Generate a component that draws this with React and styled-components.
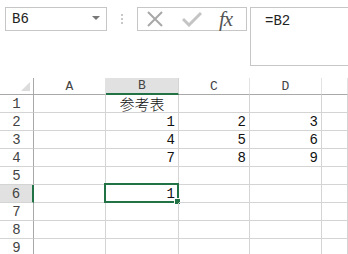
import React from "react";
import styled, { createGlobalStyle } from "styled-components";

const Global = createGlobalStyle`
  html, body { margin: 0; padding: 0; background: #fff; overflow: hidden; }
`;

const Page = styled.div`
  width: 348px;
  height: 254px;
  overflow: hidden;
  background: #fff;
  font-family: "Liberation Mono", "Noto Sans CJK SC", monospace;
`;

const Toolbar = styled.div`
  display: flex;
  align-items: flex-start;
  padding: 7px 0 0 5px;
  height: 78px;
  box-sizing: border-box;
`;

const NameBox = styled.div`
  width: 102px;
  height: 24px;
  box-sizing: border-box;
  border: 1px solid #c6c6c6;
  display: flex;
  align-items: center;
  justify-content: space-between;
  padding: 0 6px 0 6px;
  font-size: 14px;
  color: #222;
`;

const Caret = styled.span`
  width: 0;
  height: 0;
  border-left: 4px solid transparent;
  border-right: 4px solid transparent;
  border-top: 4px solid #777;
  margin-bottom: 3px;
`;

const Dots = styled.div`
  width: 30px;
  height: 24px;
  display: flex;
  flex-direction: column;
  align-items: center;
  justify-content: center;
  gap: 2px;
  span {
    width: 2px;
    height: 2px;
    background: #c8c8c8;
  }
`;

const FxBox = styled.div`
  width: 110px;
  height: 24px;
  box-sizing: border-box;
  border: 1px solid #c6c6c6;
  display: flex;
  align-items: center;
  padding-left: 8px;
  gap: 18px;
`;

const FxLabel = styled.span`
  font-family: "Liberation Serif", serif;
  font-style: italic;
  font-size: 21px;
  color: #555;
  letter-spacing: -1px;
  margin-left: -1px;
`;

const FormulaInput = styled.div`
  margin-left: 3px;
  flex: 1;
  height: 59px;
  box-sizing: border-box;
  border: 1px solid #c6c6c6;
  border-right: none;
  padding: 5px 0 0 14px;
  font-size: 14px;
  color: #222;
`;

const Sheet = styled.div`
  display: grid;
  grid-template-columns: 34px 72px 73px 71px 72px 1fr;
  grid-auto-rows: 18px;
  grid-template-rows: 17px;
  font-size: 14px;
`;

const Cell = styled.div`
  position: relative;
  box-sizing: border-box;
  border-right: 1px solid #d4d4d4;
  border-bottom: 1px solid #d4d4d4;
  display: flex;
  align-items: center;
  justify-content: ${(p) => (p.$center ? "center" : "flex-end")};
  padding-right: ${(p) => (p.$center ? "0" : "3px")};
  color: #111;
  line-height: 1;
`;

const ColHead = styled(Cell)`
  justify-content: center;
  padding: 0;
  color: #444;
  font-size: 13px;
  border-right-color: ${(p) => (p.$active ? "#d4d4d4" : "#e2e2e2")};
  background: ${(p) => (p.$active ? "#e1e1e1" : "#fff")};
  border-bottom: ${(p) => (p.$active ? "2px solid #217346" : "1px solid #a9a9a9")};
`;

const Corner = styled(Cell)`
  border-bottom: 1px solid #a9a9a9;
  border-right: 1px solid #a9a9a9;
  svg { position: absolute; right: 3px; bottom: 3px; }
`;

const RowHead = styled(Cell)`
  justify-content: center;
  padding: 0;
  color: #444;
  border-right: ${(p) => (p.$active ? "2px solid #217346" : "1px solid #a9a9a9")};
  background: ${(p) => (p.$active ? "#e1e1e1" : "#fff")};
`;

const CjkText = styled.span`
  font-family: "Noto Sans CJK SC", sans-serif;
  font-size: 15px;
  font-weight: 300;
`;

const Selection = styled.div`
  position: absolute;
  left: -2px;
  top: -2px;
  right: -1px;
  bottom: -1px;
  border: 2px solid #217346;
  pointer-events: none;
`;

const Handle = styled.div`
  position: absolute;
  right: -4px;
  bottom: -4px;
  width: 5px;
  height: 5px;
  background: #217346;
  border: 1px solid #fff;
`;

const cols = ["A", "B", "C", "D", ""];

const data = {
  1: { B: "cjk" },
  2: { B: "1", C: "2", D: "3" },
  3: { B: "4", C: "5", D: "6" },
  4: { B: "7", C: "8", D: "9" },
  6: { B: "1" },
};

export default function App() {
  const rows = [1, 2, 3, 4, 5, 6, 7, 8, 9];
  return (
    <Page>
      <Global />
      <Toolbar>
        <NameBox>
          <span>B6</span>
          <Caret />
        </NameBox>
        <Dots>
          <span />
          <span />
          <span />
        </Dots>
        <FxBox>
          <svg width="18" height="16" viewBox="0 0 18 16">
            <path d="M2 1 L16 15 M16 1 L2 15" stroke="#a8a8a8" strokeWidth="2" fill="none" />
          </svg>
          <svg width="20" height="16" viewBox="0 0 20 16">
            <path d="M1 8 L7 14 L19 2" stroke="#c4c4c4" strokeWidth="3" fill="none" />
          </svg>
          <FxLabel>fx</FxLabel>
        </FxBox>
        <FormulaInput>=B2</FormulaInput>
      </Toolbar>
      <Sheet>
        <Corner>
          <svg width="9" height="9" viewBox="0 0 9 9">
            <path d="M9 0 L9 9 L0 9 Z" fill="#dcdcdc" />
          </svg>
        </Corner>
        {cols.map((c, i) => (
          <ColHead key={i} $active={c === "B"}>{c}</ColHead>
        ))}
        {rows.map((r) => (
          <React.Fragment key={r}>
            <RowHead $active={r === 6}>{r}</RowHead>
            {cols.map((c, i) => {
              const v = data[r] && data[r][c];
              return (
                <Cell key={i} $center={v === "cjk"}>
                  {v === "cjk" ? <CjkText>参考表</CjkText> : v}
                  {r === 6 && c === "B" && (
                    <Selection>
                      <Handle />
                    </Selection>
                  )}
                </Cell>
              );
            })}
          </React.Fragment>
        ))}
      </Sheet>
    </Page>
  );
}
